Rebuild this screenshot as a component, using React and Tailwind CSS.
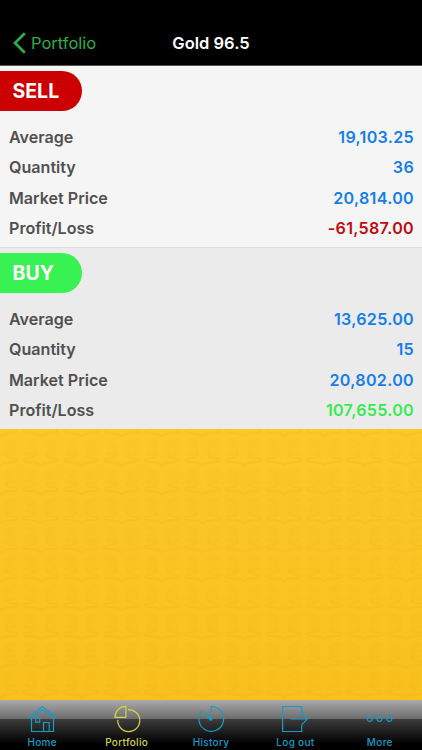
import React from 'react';

const positions = [
  {
    side: 'SELL',
    badge: 'bg-[#cc0000]',
    panel: 'h-[182px] border-b bg-[#f5f5f5]',
    rows: [
      { label: 'Average', value: '19,103.25' },
      { label: 'Quantity', value: '36' },
      { label: 'Market Price', value: '20,814.00' },
      { label: 'Profit/Loss', value: '-61,587.00', color: 'text-[#bd0c10]' },
    ],
  },
  {
    side: 'BUY',
    badge: 'bg-[#38f253]',
    panel: 'h-[181px] bg-[#ebebeb]',
    rows: [
      { label: 'Average', value: '13,625.00' },
      { label: 'Quantity', value: '15' },
      { label: 'Market Price', value: '20,802.00' },
      { label: 'Profit/Loss', value: '107,655.00', color: 'text-[#38ea52]' },
    ],
  },
];

function HomeIcon() {
  return (
    <>
      <path d="M1.7 11.5 14.3 1.5 26.9 11.5V13h-1.8L14.3 4.5 3.5 13H1.7Z" />
      <path d="M3.5 13v13.5h22V13" />
      <path d="M7.7 13.2h4v4h-4zM15.5 26.5v-9h5.7v9" />
    </>
  );
}

function PortfolioIcon() {
  return (
    <>
      <path d="M12.9 1.4V12.4H1.9A11 11 0 0 1 12.9 1.4Z" />
      <path d="M15 4.6A11 11 0 1 1 4.8 14.8" />
    </>
  );
}

function HistoryIcon() {
  return (
    <>
      <path d="M14.2 6.5V1.5A12.4 12.4 0 1 1 5.3 5.3" />
      <path d="M8.9 8.6 14.6 13.1A1.2 1.2 0 1 1 12.9 14.8Z" fill="currentColor" />
    </>
  );
}

function LogoutIcon() {
  return (
    <>
      <path d="M20.7 8.5v-7H1.6v25h19.1V20" />
      <path d="M9.5 14h16.8M20.7 8.5l5.6 5.5-5.6 5.8" />
    </>
  );
}

function MoreIcon() {
  return (
    <>
      <circle cx="3.7" cy="13.8" r="2.5" />
      <circle cx="13.5" cy="13.8" r="2.5" />
      <circle cx="23.3" cy="13.8" r="2.5" />
    </>
  );
}

const tabs = [
  { name: 'Home', Icon: HomeIcon },
  { name: 'Portfolio', Icon: PortfolioIcon, active: true },
  { name: 'History', Icon: HistoryIcon },
  { name: 'Log out', Icon: LogoutIcon },
  { name: 'More', Icon: MoreIcon },
];

function PositionPanel({ side, badge, panel, rows }) {
  return (
    <section className={`shrink-0 border-[#dcdcdf] pt-[5px] ${panel}`}>
      <h2 className={`flex h-10 w-[82px] items-center rounded-r-[20px] pt-0.5 pl-[12.5px] text-[19.5px] font-bold text-white ${badge}`}>
        {side}
      </h2>
      <dl className="mt-[11px] pr-2 pl-[9px] text-[16.1px] leading-[30.3px] font-semibold">
        {rows.map((row) => (
          <div key={row.label} className="flex justify-between">
            <dt className="text-[#505050]">{row.label}</dt>
            <dd className={`tracking-[0.3px] ${row.color || 'text-[#167eea]'}`}>{row.value}</dd>
          </div>
        ))}
      </dl>
    </section>
  );
}

// Faint damask tile repeated over the yellow area
function Backdrop() {
  return (
    <div className="flex-1 bg-linear-to-b from-[#fbc929] to-[#f9c01d]">
      <svg className="block h-full w-full">
        <defs>
          <pattern id="damask" x="20.5" y="9" width="40.5" height="29" patternUnits="userSpaceOnUse">
            <g fill="none" stroke="#d99e00" strokeLinecap="round" strokeLinejoin="round">
              <g strokeWidth="4.5" opacity="0.07">
                <path d="M6 4Q10 3 14 6M8 10Q11 8 14 11M6 15Q11 17 14 15" />
                <path d="M34.5 4Q30.5 3 26.5 6M32.5 10Q29.5 8 26.5 11M34.5 15Q29.5 17 26.5 15" />
              </g>
              <g strokeWidth="1.8" opacity="0.12">
                <path d="M15 17Q12 21 5 20.5Q1 22 5 24L14 24.5Q18 25 20.25 27.5" />
                <path d="M25.5 17Q28.5 21 35.5 20.5Q39.5 22 35.5 24L26.5 24.5Q22.5 25 20.25 27.5" />
              </g>
            </g>
          </pattern>
        </defs>
        <rect width="100%" height="100%" fill="url(#damask)" />
      </svg>
    </div>
  );
}

export default function App() {
  return (
    <div className="flex h-[750px] w-[422px] flex-col overflow-hidden bg-black font-['Inter',sans-serif]">
      <header className="grid h-[66px] shrink-0 grid-cols-[1fr_auto_1fr] items-end border-b border-[#555] bg-black px-3 pb-[10px] text-[16.5px] leading-6">
        <button className="flex items-center gap-1 text-[#2eae4b]">
          <svg className="h-[22px] w-[15px]" viewBox="0 0 15 22" fill="none" stroke="currentColor" strokeWidth="2.7">
            <path d="M12.8 1.2 3 11l9.8 9.8" />
          </svg>
          Portfolio
        </button>
        <h1 className="font-semibold text-white">Gold 96.5</h1>
      </header>

      <main className="flex flex-1 flex-col">
        {positions.map((position) => (
          <PositionPanel key={position.side} {...position} />
        ))}
        <Backdrop />
      </main>

      <nav className="flex h-[50px] shrink-0 bg-[linear-gradient(180deg,#aaa_0,#6c6c6c_19px,#3c3c3c_19px,#000_44px)]">
        {tabs.map(({ name, Icon, active }) => (
          <a
            key={name}
            className={`flex flex-1 flex-col items-center pt-[5px] text-[10px] leading-3 font-medium tracking-[0.3px] ${active ? 'text-[#d3d34c]' : 'text-[#189bc7]'}`}
          >
            <svg className="size-7" viewBox="0 0 28 28" fill="none" stroke="currentColor" strokeWidth="1.2">
              <Icon />
            </svg>
            <span className="mt-[3px]">{name}</span>
          </a>
        ))}
      </nav>
    </div>
  );
}
